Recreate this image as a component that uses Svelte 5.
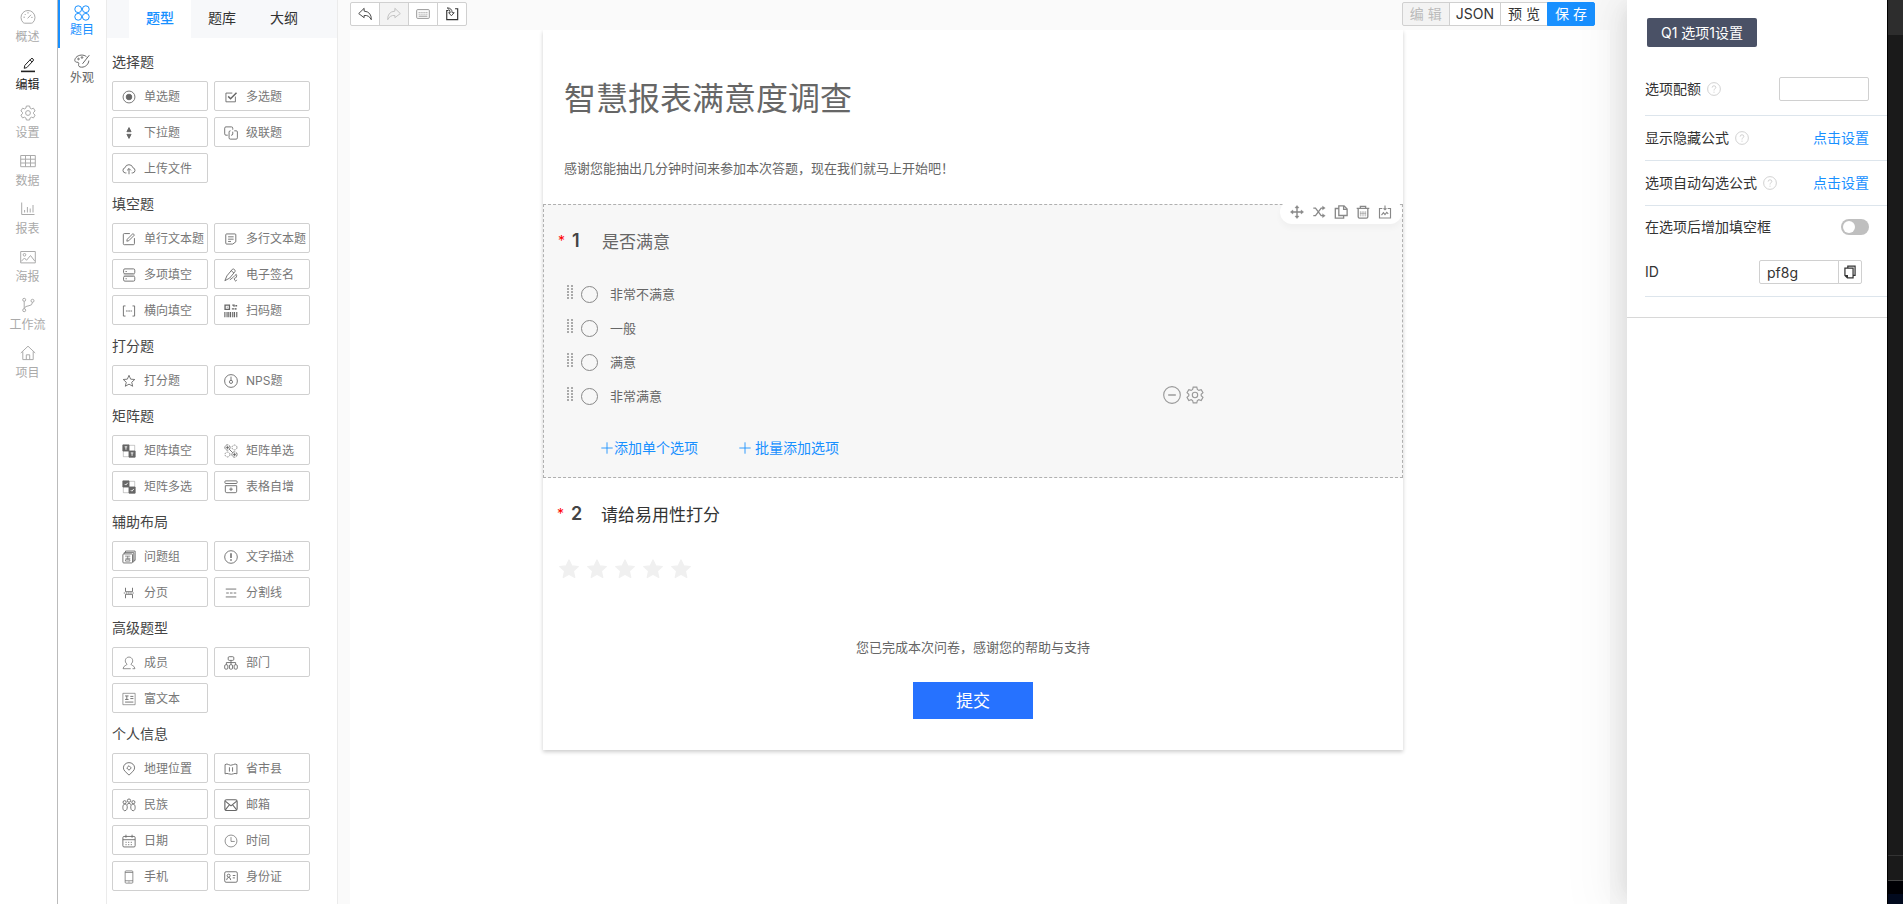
<script lang="ts">
  // Icon shapes, all drawn on a 16x16 grid
  const icons: Record<string, string> = {
    gauge: '<path d="M3.2 13.6A7 7 0 1 1 12.8 13.6Q12.2 14.2 11.4 14.2H4.6Q3.8 14.2 3.2 13.6Z"/><path d="M7.6 9.4 11 5.8M8 3v1.6M3.4 8.2H5M11.2 8.4h1.4M4.7 5l1 1"/>',
    pencil: '<path d="M4.2 11.3 4.8 8.4 11 1.8Q12 .9 13 1.9T13 4L6.8 10.6ZM10 2.9l2.1 2.1"/><path d="M1 14.4h14" stroke-width="1.6"/>',
    gear: '<path d="M6.4 1h3.2l.5 2.1 1.3.8 2.1-.7 1.6 2.8-1.6 1.4v1.3l1.6 1.4-1.6 2.8-2.1-.7-1.3.8-.5 2H6.4l-.5-2-1.3-.8-2.1.7L.9 10.1l1.6-1.4V7.4L.9 6l1.6-2.8 2.1.7 1.3-.8z"/><circle cx="8" cy="8" r="2.4"/>',
    table: '<path d="M.7 2.5h14.6v11.2H.7ZM.7 6.2h14.6M.7 10h14.6M5.5 2.5v11.2M10.5 2.5v11.2"/>',
    chart: '<path d="M1.7 1.5v12h12.8M4.6 11.5V9M7.4 11.5V6M10.2 11.5V7.5M13 11.5V4"/>',
    image: '<path d="M.7 2.5h14.6v11.4H.7Z"/><circle cx="4.5" cy="5.8" r="1.3"/><path d="M1.2 12.4 4.5 9l2 2.3 4-4.8 4.3 5.6"/>',
    branch: '<circle cx="4.2" cy="2.8" r="1.5"/><circle cx="12.5" cy="3.8" r="1.5"/><circle cx="4.2" cy="13.2" r="1.5"/><path d="M4.2 4.3v7.4M12.5 5.3Q12.3 8.5 9 8.7 4.6 9 4.2 11.7"/>',
    home: '<path d="M.8 8 8 1.2 15.2 8M2.8 6.4v8.2h10.4V6.4M6.3 14.6V9.8h3.4v4.8"/>',
    clover: '<circle cx="4.2" cy="4.2" r="3.4"/><circle cx="11.8" cy="4.2" r="3.4"/><circle cx="4.2" cy="11.8" r="3.4"/><circle cx="11.8" cy="11.8" r="3.4"/>',
    palette: '<path d="M12.5 3.8C10 1.3 4.5 1.5 2 4.5-.2 7.2 1 9.2 2.8 9.2c2 0 2.2.8 1.8 2.2-.4 1.6.6 2.8 3 2.8 4 0 7-3 7.200-6.600"/><circle cx="4.5" cy="6" r=".8"/><circle cx="8" cy="4.5" r=".8"/><path d="M15.3 2.2 8.5 10.8"/>',
    radio: '<circle cx="8" cy="8" r="6.8"/><circle cx="8" cy="8" r="3.2" fill="currentColor"/>',
    check: '<path d="M13 7.5v6H2.2V3.5H9.5"/><path d="M4.8 7.3 7.5 10 14.3 3.2" stroke-width="1.7"/>',
    updown: '<path d="M8 1.8 10.4 6.5H5.6ZM8 14.2 5.6 9.5h4.8Z" fill="currentColor"/>',
    cascade: '<path d="M4.3 10.5H2.2Q.8 10.5.8 9V2.5Q.8 1 2.2 1H8.5Q10 1 10 2.500v1.700M11.700 5.500H14q1.300 0 1.300 1.300v6.700q0 1.500-1.400 1.500H7.200q-1.400 0-1.400-1.500V7q0-1.500 1.400-1.500H7.500M10 6.500v2.600q0 1.400-1.400 1.400H8"/>',
    cloud: '<path d="M5 12.500H3.800A3 3 0 0 1 3.400 6.600 4.700 4.700 0 0 1 12.500 6.600 3 3 0 0 1 12.200 12.500H11M8 14V7.600M5.800 9.600 8 7.400l2.200 2.200"/>',
    edit: '<path d="M9 1.800H2.700Q1.500 1.800 1.500 3v10.300q0 1.200 1.200 1.200h10.300q1.200 0 1.200-1.200V7"/><path d="M5.500 10.500 6 8.300 12.500 1.800l1.700 1.700L7.700 10Z"/>',
    lines: '<path d="M10 13.800H3Q2 13.800 2 12.800V3.200Q2 2.200 3 2.200h9.500q1 0 1 1v8M4.700 5.500h6.300M4.700 8.200h6.300M4.700 10.800h3.300M13.500 11.200 10 13.800"/>',
    blanks: '<rect x="1.800" y="1" width="12.800" height="5.600" rx="1.500"/><rect x="1.800" y="9.400" width="12.800" height="5.600" rx="1.500"/><path d="M4 4h1.500M4 12.300h1.500"/><path d="M1.800 8h12.800" opacity=".5"/>',
    sign: '<path d="M1 14.500 3.300 9 9.500 1.500q1.500-.9 2.600.4t.4 2.300L6.500 11.500ZM8.200 3l3.200 2.800M6.700 13.500Q10.500 11 12.500 8.500t2 .2-1.800 2.700-.5 2.500 2.300-.4"/>',
    bracket: '<path d="M4 2.200H1.600v11.600H4M12 2.200h2.400v11.600H12"/><path d="M4.500 8h7" stroke-dasharray="2 .6"/>',
    qrcode: '<path d="M1.200 1.200h5v5h-5ZM9.500 1.200h2v2M13 2h2M9 5.500h3M13.500 4.500v2" stroke-width="1.500"/><path d="M3.200 3.700h1"/><path d="M1 9v6M3.500 9v6M5.500 9v6M7.500 9v6M10 9v6M12 9v6M14.600 9v6" stroke-width="1.300"/>',
    star: '<path d="M8 1.500 9.900 5.900l4.700.4-3.500 3.100 1.100 4.600L8 11.600 3.800 14l1.100-4.600L1.400 6.300l4.700-.4Z"/>',
    nps: '<circle cx="8" cy="8" r="7.300"/><circle cx="8" cy="9" r="1.800"/><path d="M8 3v4.200"/>',
    matrixFill: '<path d="M1 1h7v7H1ZM8 8h7v7H8Z" fill="currentColor"/><path d="M8 1.500h6.500V8M1.500 8v6.500H8" opacity=".4"/><path d="M3 3.200h3M4.500 3.200v3.300M10 10.200h3M11.500 10.200v3.300" stroke="#fff"/>',
    matrixRadio: '<circle cx="4" cy="4" r="3" stroke-dasharray="3 .8"/><circle cx="12" cy="12" r="3" stroke-dasharray="3 .8"/><circle cx="12" cy="4" r="2.800" stroke-dasharray="2 1" opacity=".8"/><circle cx="4" cy="12" r="2.800" stroke-dasharray="2 1" opacity=".8"/><path d="M6 6l4 4"/><circle cx="4" cy="4" r="1" fill="currentColor"/><circle cx="12" cy="12" r="1" fill="currentColor"/>',
    matrixCheck: '<path d="M1 1h7v7H1ZM8 8h7v7H8Z" fill="currentColor"/><path d="M8 1.500h6.500V8M1.500 8v6.500H8" opacity=".4"/><path d="M3 4.500 4.300 5.800 6.500 3.200M10 11.500l1.300 1.300 2.200-2.600" stroke="#fff"/>',
    addRow: '<rect x="1" y="1" width="14" height="3" rx="1"/><path d="M1.500 6.500h13v6.300q0 1.700-1.700 1.700H3.200q-1.700 0-1.700-1.700ZM8 8.500v4M6 10.500h4"/>',
    group: '<path d="M4 3V1.200h11v10.600h-1.500M2.500 4.500V3h11v10.500H12"/><rect x="1" y="4.500" width="11" height="10.300" rx="1"/><path d="M3.500 7h6M6.500 7v3M4 9.500h5.500M4 12.700V11h5v1.700Z" stroke-width=".8"/>',
    notice: '<circle cx="8" cy="8" r="7.200"/><path d="M8 3.800v5.400M8 10.600v1.600" stroke-width="1.700"/>',
    page: '<path d="M4 2v4.500h8V2M4 14V9.500h8V14"/><path d="M2 8h12" stroke-dasharray="1.500 1"/>',
    divider: '<path d="M2 3.500h12M2 12.500h12"/><path d="M2.500 8h11.500" stroke-dasharray="3 1.300"/>',
    member: '<path d="M5.800 9.300C2 6.500 4 1.200 8 1.200s6 5.300 2.200 8.100c-.2 1.500 4.300 1.300 4.600 5.200H12M5.800 9.300c.2 1.500-4.300 1.300-4.600 5.200H10" stroke-width=".8"/>',
    tree: '<rect x="4.800" y=".8" width="6.400" height="4.200" rx="1.200"/><path d="M8 5v5M2.700 10V7.500h10.600V10"/><rect x=".8" y="10" width="3.600" height="5" rx="1.200"/><rect x="6.200" y="10" width="3.600" height="5" rx="1.200"/><rect x="11.600" y="10" width="3.600" height="5" rx="1.200"/>',
    rich: '<path d="M1 1.500h14v13H1Z" opacity=".7"/><path d="M3.500 4.500h4M5.500 4.500v4M3.500 8.500h4M9.500 5h3.500M9.500 7.500h3.500M3.500 11.500h9.500"/>',
    pin: '<path d="M8 15C5 12 1.600 9.800 1.600 6.700A6.400 6 0 0 1 14.400 6.700C14.400 9.800 11 12 8 15Z"/><path d="M8 4.200 10.600 6.800 8 9.400 5.400 6.800Z"/>',
    map: '<path d="M1.200 3Q3.500 1.500 5.300 3T10.700 3Q12.500 1.500 14.800 3V13.500Q12.500 12.500 10.700 13.500T5.300 13.500Q3.500 12.500 1.200 13.500ZM6.200 6v5M9.800 6v5"/>',
    people: '<circle cx="8" cy="3" r="1.900"/><circle cx="3" cy="4.800" r="1.800"/><circle cx="13" cy="4.800" r="1.800"/><path d="M3 7C.3 7 .3 14.500 3 14.500S6 12 6 10 4.500 7 3 7ZM13 7c2.700 0 2.700 7.500 0 7.500S10 12 10 10s1.500-3 3-3ZM5.500 7.500Q8 4.500 10.500 7.500"/>',
    mail: '<g stroke-width="1.300"><rect x="1" y="2" width="14" height="12.300" rx="2"/><path d="M1.500 3.500 8 9l6.500-5.500M1.500 13.500 6 8M14.500 13.500 10 8"/></g>',
    calendar: '<rect x="1" y="2.800" width="14" height="12" rx="1.300"/><path d="M1 6.500h14M4.500 .8v3.500M11.500 .8v3.500"/><path d="M4 9.500h8.500M4 12.200h8.500" stroke-dasharray="1.300 1.700"/>',
    clock: '<g stroke-width=".8"><circle cx="8" cy="8" r="6.800"/><path d="M8 3.500V8.500h4.300"/></g>',
    phone: '<g stroke-width=".8"><rect x="3.600" y="1" width="8.800" height="14" rx="1"/><path d="M3.600 2.800h8.800M3.600 12.300h8.800M7.300 13.700h1.400"/></g>',
    card: '<rect x=".8" y="2" width="14.400" height="12" rx="1.600"/><path d="M3 11.500Q3.300 8.700 5.300 8.500T7.700 11.500M10 6.300h3M10 9h2.500"/><circle cx="5.300" cy="6.500" r="1.700"/>',
    undo: '<path d="M7 1.500.8 7.500 7 12.200V9.700Q12.500 9 15.200 14.500 15.500 5.500 7 4.700Z"/>',
    redo: '<path d="M9 1.500 15.200 7.500 9 12.200V9.700Q3.500 9 .8 14.500 .5 5.500 9 4.700Z"/>',
    keyboard: '<g stroke="#888"><rect x=".8" y="3" width="14.400" height="10" rx="1"/><path d="M3 6.200h10M3 8.200h10" stroke-dasharray="1.200 1"/><path d="M3 10.500h10"/></g>',
    importer: '<path d="M4 4H2v10.500h12.500V2H11.500" stroke-width="1.300"/><path d="M2.500 1Q8 1 8.200 6.500h2.300L7.300 10 4.200 6.500h1.800Q6 3 2.500 1Z"/>',
    move: '<path d="M8 2v12M2 8h12" stroke-width="1.600"/><path d="M8 .5 10.300 3.300H5.700ZM8 15.500 5.700 12.700h4.600ZM.5 8 3.300 5.700v4.600ZM15.500 8 12.700 10.300V5.700Z" fill="currentColor" stroke-width=".5"/>',
    shuffle: '<path d="M1.500 3.500H4L10.500 12.200H13M1.500 12.200H4L10.500 3.500H13" stroke-width="1.500"/><path d="M12 1.200 15.200 3.500 12 5.800ZM12 9.900l3.200 2.300L12 14.500Z" fill="currentColor" stroke-width=".3"/>',
    copy: '<g stroke-width="1.500"><path d="M5.500 1H11.500L15 4.500V12H5.500ZM11 1v4h4M5.500 4H1.500v11h9.500v-3"/></g>',
    trash: '<g stroke-width="1.500"><path d="M.8 3.800h14.400M5 3.800V1.500h6v2.300M2.500 4v9.500q0 1.500 1.500 1.500h8q1.500 0 1.500-1.500V4"/></g><path d="M4.500 9.500h7M5 7v6M7 7v6M9 7v6M11 7v6" opacity=".6"/>',
    save: '<path d="M5 4H1.700v10.800h12.600V4H11M8 .5v5M6.300 3.800 8 5.500l1.700-1.700M4 11.500l2.200-2.800L8 11l2-2.500 1.700 1.700" stroke-width="1.300"/>',
    minus: '<circle cx="8" cy="8" r="7.400"/><path d="M4.600 8h6.800" stroke-width="1.300"/>',
    duplicate: '<g stroke-width="1.400"><path d="M5.500 3.500V1.200h8.300v10.600h-2.300M2.200 3.500h9.300v11.300H5L2.200 12ZM2.200 12H5v2.800"/></g>',
    help: '<circle cx="8" cy="8" r="7.300"/><path d="M5.900 6.400Q6 4.300 8 4.300t2.100 1.900q0 1.100-1.200 1.700T8 9.700M8 11v1.300"/>',
    rate: '<path d="M8 .8 10.200 5.500l5.200.6-3.900 3.500 1.100 5.200L8 12.200 3.400 14.800l1.100-5.200L.6 6.100l5.200-.6Z" fill="currentColor" stroke-linejoin="round"/>',
    plus: '<path d="M8 1.500v13M1.500 8h13"/>'
  };

  const mainNav = [
    { label: '概述', icon: 'gauge' },
    { label: '编辑', icon: 'pencil' },
    { label: '设置', icon: 'gear' },
    { label: '数据', icon: 'table' },
    { label: '报表', icon: 'chart' },
    { label: '海报', icon: 'image' },
    { label: '工作流', icon: 'branch' },
    { label: '项目', icon: 'home' }
  ];

  const subNav = [
    { label: '题目', icon: 'clover' },
    { label: '外观', icon: 'palette' }
  ];

  const tabs = ['题型', '题库', '大纲'];

  const groups = [
    { title: '选择题', items: [['单选题', 'radio'], ['多选题', 'check'], ['下拉题', 'updown'], ['级联题', 'cascade'], ['上传文件', 'cloud']] },
    { title: '填空题', items: [['单行文本题', 'edit'], ['多行文本题', 'lines'], ['多项填空', 'blanks'], ['电子签名', 'sign'], ['横向填空', 'bracket'], ['扫码题', 'qrcode']] },
    { title: '打分题', items: [['打分题', 'star'], ['NPS题', 'nps']] },
    { title: '矩阵题', items: [['矩阵填空', 'matrixFill'], ['矩阵单选', 'matrixRadio'], ['矩阵多选', 'matrixCheck'], ['表格自增', 'addRow']] },
    { title: '辅助布局', items: [['问题组', 'group'], ['文字描述', 'notice'], ['分页', 'page'], ['分割线', 'divider']] },
    { title: '高级题型', items: [['成员', 'member'], ['部门', 'tree'], ['富文本', 'rich']] },
    { title: '个人信息', items: [['地理位置', 'pin'], ['省市县', 'map'], ['民族', 'people'], ['邮箱', 'mail'], ['日期', 'calendar'], ['时间', 'clock'], ['手机', 'phone'], ['身份证', 'card']] }
  ];

  const historyTools = [
    { label: '撤销', icon: 'undo', disabled: false },
    { label: '重做', icon: 'redo', disabled: true },
    { label: '快捷键', icon: 'keyboard', disabled: false },
    { label: '导入', icon: 'importer', disabled: false }
  ];

  const questionTools = [
    { label: '移动', icon: 'move' },
    { label: '逻辑', icon: 'shuffle' },
    { label: '复制', icon: 'copy' },
    { label: '删除', icon: 'trash' },
    { label: '收藏', icon: 'save' }
  ];

  let activeMain = $state('编辑');
  let activeSub = $state('题目');
  let activeTab = $state('题型');
  let options = $state(['非常不满意', '一般', '满意', '非常满意']);
  let activeOption = $state(3);
  let answer = $state('');
  let score = $state(0);
  let quota = $state('');
  let withBlank = $state(false);
  let optionId = $state('pf8g');

  function addOption() {
    options.push('选项');
  }

  function removeOption(index: number) {
    options.splice(index, 1);
  }
</script>

{#snippet icon(name: string)}
  <svg class="icon" viewBox="0 0 16 16" aria-hidden="true">{@html icons[name]}</svg>
{/snippet}

<div class="app">
  <nav class="main-nav">
    {#each mainNav as item}
      <button type="button" class:active={activeMain === item.label} onclick={() => (activeMain = item.label)}>
        {@render icon(item.icon)}
        <span>{item.label}</span>
      </button>
    {/each}
  </nav>

  <nav class="sub-nav">
    {#each subNav as item}
      <button type="button" class:active={activeSub === item.label} onclick={() => (activeSub = item.label)}>
        {@render icon(item.icon)}
        <span>{item.label}</span>
      </button>
    {/each}
  </nav>

  <aside class="types">
    <div class="tabs">
      {#each tabs as tab}
        <button type="button" class:active={activeTab === tab} onclick={() => (activeTab = tab)}>{tab}</button>
      {/each}
    </div>
    <div class="groups">
      {#each groups as group}
        <h3>{group.title}</h3>
        <div class="type-grid">
          {#each group.items as [label, name]}
            <button type="button">{@render icon(name)}<span>{label}</span></button>
          {/each}
        </div>
      {/each}
    </div>
  </aside>

  <main class="editor">
    <header class="toolbar">
      <div class="tool-group history">
        {#each historyTools as tool}
          <button type="button" aria-label={tool.label} disabled={tool.disabled}>{@render icon(tool.icon)}</button>
        {/each}
      </div>
      <div class="tool-group modes">
        <button type="button" disabled>编 辑</button>
        <button type="button">JSON</button>
        <button type="button">预 览</button>
        <button type="button" class="primary">保 存</button>
      </div>
    </header>

    <div class="canvas">
      <article class="paper">
        <h1>智慧报表满意度调查</h1>
        <p class="intro">感谢您能抽出几分钟时间来参加本次答题，现在我们就马上开始吧！</p>

        <section class="question selected">
          <div class="question-tools">
            {#each questionTools as tool}
              <button type="button" aria-label={tool.label}>{@render icon(tool.icon)}</button>
            {/each}
          </div>
          <div class="question-title">
            <span class="required">*</span>
            <span class="number">1</span>
            <h2>是否满意</h2>
          </div>
          <ul class="options">
            {#each options as option, i}
              <li>
                <span class="handle"></span>
                <label>
                  <input type="radio" name="q1" value={option} bind:group={answer} />
                  <span>{option}</span>
                </label>
                {#if i === activeOption}
                  <div class="option-tools">
                    <button type="button" aria-label="删除选项" onclick={() => removeOption(i)}>{@render icon('minus')}</button>
                    <button type="button" aria-label="选项设置">{@render icon('gear')}</button>
                  </div>
                {/if}
              </li>
            {/each}
          </ul>
          <div class="add-links">
            <button type="button" onclick={addOption}>{@render icon('plus')}添加单个选项</button>
            <button type="button" class="batch">{@render icon('plus')}批量添加选项</button>
          </div>
        </section>

        <section class="question">
          <div class="question-title">
            <span class="required">*</span>
            <span class="number">2</span>
            <h2>请给易用性打分</h2>
          </div>
          <div class="rating">
            {#each [1, 2, 3, 4, 5] as n}
              <button type="button" aria-label="{n} 分" class:on={n <= score} onclick={() => (score = n)}>
                {@render icon('rate')}
              </button>
            {/each}
          </div>
        </section>

        <footer>
          <p>您已完成本次问卷，感谢您的帮助与支持</p>
          <button type="button" class="submit">提交</button>
        </footer>
      </article>
    </div>
  </main>

  <aside class="drawer">
    <div class="drawer-tag">Q1 选项1设置</div>
    <div class="settings">
      <div class="row tall">
        <label for="quota">选项配额</label>
        <span class="help">{@render icon('help')}</span>
        <input id="quota" class="quota" type="text" bind:value={quota} />
      </div>
      <div class="row">
        <span>显示隐藏公式</span>
        <span class="help">{@render icon('help')}</span>
        <a href="#visible">点击设置</a>
      </div>
      <div class="row">
        <span>选项自动勾选公式</span>
        <span class="help">{@render icon('help')}</span>
        <a href="#auto">点击设置</a>
      </div>
      <div class="row plain">
        <label for="with-blank">在选项后增加填空框</label>
        <input id="with-blank" class="switch" type="checkbox" bind:checked={withBlank} />
      </div>
      <div class="row id-row">
        <label for="option-id">ID</label>
        <div class="id-field">
          <input id="option-id" type="text" bind:value={optionId} />
          <button type="button" aria-label="复制 ID">{@render icon('duplicate')}</button>
        </div>
      </div>
    </div>
  </aside>

  <div class="desktop-edge">
    <div class="edge-top"></div>
    <div class="edge-body"></div>
    <div class="edge-status"></div>
    <div class="edge-bottom"></div>
    <div class="edge-dock"></div>
  </div>
</div>

<style>
  :global(body) {
    background: #fafafa;
  }

  .app {
    display: flex;
    min-height: 100vh;
    overflow: hidden;
    background: #fafafa;
    color: #333;
    font-family: Inter, 'Noto Sans CJK SC', sans-serif;
    font-size: 14px;
    line-height: 20px;
  }

  .app * {
    box-sizing: border-box;
  }

  button {
    padding: 0;
    border: 0;
    background: none;
    color: inherit;
    font: inherit;
    cursor: pointer;
  }

  input {
    margin: 0;
    font: inherit;
    color: inherit;
  }

  h1, h2, h3, p, ul {
    margin: 0;
    padding: 0;
    font-weight: 400;
  }

  .icon {
    display: block;
    flex: none;
    width: 14px;
    height: 14px;
    fill: none;
    stroke: currentColor;
    stroke-width: 1;
  }

  /* Navigation rails */
  .main-nav, .sub-nav {
    display: flex;
    flex: none;
    flex-direction: column;
    background: #fff;
    font-size: 12px;
    line-height: 18px;
  }

  .main-nav {
    width: 58px;
    border-right: 1px solid #bbb;
    color: #aaa;
  }

  .sub-nav {
    width: 49px;
    border-right: 1px solid #ebebeb;
    color: #666;
  }

  .main-nav button, .sub-nav button {
    display: flex;
    flex-direction: column;
    align-items: center;
    gap: 3px;
    height: 48px;
    padding: 9px 2px 0 0;
  }

  .main-nav .active {
    color: #222;
  }

  .sub-nav button {
    gap: 0;
    padding: 5px 2px 0 0;
    border-left: 2px solid transparent;
  }

  .sub-nav .active {
    border-color: #1890ff;
    color: #1890ff;
  }

  .main-nav .icon, .sub-nav .icon {
    width: 16px;
    height: 16px;
  }

  /* Question types */
  .types {
    flex: none;
    width: 231px;
    border-right: 1px solid #ebebeb;
    background: #fff;
  }

  .tabs {
    display: flex;
    height: 38px;
    padding-left: 22px;
    background: #f7f8fa;
  }

  .tabs button {
    width: 62px;
    padding-bottom: 2px;
  }

  .tabs .active {
    background: #fff;
    color: #1890ff;
    font-weight: 500;
  }

  .groups {
    padding: 3px 5px;
  }

  h3 {
    padding: 11px 0 9px;
    color: #444;
    font-size: 14px;
    line-height: 20px;
  }

  .type-grid {
    display: grid;
    grid-template-columns: 96px 96px;
    gap: 6px;
  }

  .type-grid button {
    display: flex;
    align-items: center;
    gap: 8px;
    height: 30px;
    padding: 2px 0 0 9px;
    border: 1px solid #d0d0d0;
    border-radius: 2px;
    color: #777;
    font-size: 12px;
    white-space: nowrap;
  }

  .type-grid .icon {
    color: #666;
  }

  /* Editor */
  .editor {
    display: flex;
    flex: 1;
    flex-direction: column;
    min-width: 0;
    padding: 0 17px 0 12px;
  }

  .toolbar {
    display: flex;
    justify-content: space-between;
    height: 30px;
    padding: 2px 15px 0 0;
  }

  .tool-group {
    display: flex;
  }

  .tool-group button {
    height: 24px;
    padding: 0 7px;
    border: 1px solid #d0d0d0;
    background: #fff;
    line-height: 20px;
  }

  .modes button {
    min-width: 48px;
    padding: 0 6px;
  }

  .tool-group button + button {
    margin-left: -1px;
  }

  .tool-group button:first-child {
    border-radius: 2px 0 0 2px;
  }

  .tool-group button:last-child {
    border-radius: 0 2px 2px 0;
  }

  .tool-group button:disabled {
    background: #f3f3f3;
    color: #bbb;
    cursor: not-allowed;
  }

  .tool-group .primary {
    border-color: #1890ff;
    background: #1890ff;
    color: #fff;
  }

  .canvas {
    flex: 1;
    padding-right: 14px;
    background: #fff;
  }

  .paper {
    max-width: 860px;
    margin: 0 auto;
    background: #fff;
    box-shadow: 0 2px 4px rgba(0, 0, 0, 0.2);
    clip-path: inset(0 -8px -8px -8px);
  }

  h1 {
    padding: 45px 21px 0;
    color: #666;
    font-size: 32px;
    line-height: 48px;
  }

  .intro {
    padding: 35px 21px 26px;
    color: #666;
    font-size: 13px;
    line-height: 20px;
  }

  .question {
    position: relative;
    padding: 24px 14px 25px;
  }

  .selected {
    padding-bottom: 19px;
    border: 1px dashed #b0b0b0;
    background: #f7f7f7;
    color: #666;
  }

  .question-tools {
    position: absolute;
    top: -5px;
    right: 0;
    display: flex;
    gap: 8px;
    padding: 5px 10px;
    border-radius: 12px;
    background: #fff;
    box-shadow: 0 4px 6px rgba(0, 0, 0, 0.03);
    color: #888;
  }

  .question-title {
    display: flex;
    line-height: 24px;
  }

  .required {
    width: 14px;
    color: #f00;
  }

  .number {
    width: 30px;
    color: #444;
    font-size: 18px;
    font-weight: 600;
    line-height: 24px;
  }

  h2 {
    font-size: 17px;
    line-height: 26px;
  }

  .options {
    padding: 22px 0 0 9px;
    list-style: none;
    font-size: 13px;
  }

  .options li {
    display: flex;
    align-items: center;
    height: 34px;
  }

  .handle {
    width: 6px;
    height: 14px;
    margin-bottom: 4px;
    background: repeating-linear-gradient(transparent 0 2px, #f7f7f7 2px 3px), linear-gradient(90deg, #aaa 2px, transparent 2px 4px, #aaa 4px);
  }

  .options label {
    display: flex;
    align-items: center;
    gap: 12px;
    width: 585px;
    padding-left: 8px;
  }

  .options input {
    width: 17px;
    height: 17px;
    border: 1px solid #888;
    border-radius: 50%;
    appearance: none;
  }

  .options input:checked {
    border: 5px solid #1890ff;
  }

  .option-tools {
    display: flex;
    gap: 5px;
    padding: 0 0 2px 5px;
    color: #999;
  }

  .option-tools .icon {
    width: 18px;
    height: 18px;
  }

  .add-links {
    display: flex;
    gap: 40px;
    padding: 25px 0 0 42px;
    color: #1890ff;
  }

  .add-links button {
    display: flex;
    align-items: center;
  }

  .add-links .batch .icon {
    margin-right: 3px;
  }

  .rating {
    display: flex;
    gap: 8px;
    padding: 31px 0 0 2px;
    color: #f0f0f0;
  }

  .rating .on {
    color: #fadb14;
  }

  .rating .icon {
    width: 20px;
    height: 20px;
  }

  .selected + .question .question-title {
    color: #333;
  }

  footer {
    display: flex;
    flex-direction: column;
    align-items: center;
    gap: 25px;
    padding: 33px 20px 31px;
    color: #666;
    font-size: 13px;
  }

  .submit {
    width: 120px;
    height: 37px;
    background: #2672ff;
    color: #fff;
    font-size: 17px;
  }

  /* Option settings */
  .drawer {
    position: relative;
    flex: none;
    width: 260px;
    padding-top: 18px;
    background: #fff;
    box-shadow: -6px 0 16px -8px rgba(0, 0, 0, 0.08), -9px 0 28px rgba(0, 0, 0, 0.05), -12px 0 48px 16px rgba(0, 0, 0, 0.03);
  }

  .drawer-tag {
    width: max-content;
    margin: 0 20px 16px;
    padding: 5px 14px 4px;
    border-radius: 2px;
    background: #4a5166;
    color: #fff;
  }

  .settings {
    padding: 0 0 20px 18px;
    border-bottom: 1px solid #d8d8d8;
  }

  .row {
    display: flex;
    align-items: center;
    height: 45px;
    padding-right: 18px;
    border-bottom: 1px solid #dde5ec;
  }

  .tall {
    height: 53px;
  }

  .plain {
    height: 42px;
    border-bottom: 0;
  }

  .id-row {
    height: 49px;
  }

  .help {
    margin-left: 6px;
    color: #ccc;
  }

  .row a {
    margin-left: auto;
    color: #1890ff;
    text-decoration: none;
  }

  .quota, .id-field input {
    width: 90px;
    height: 24px;
    padding: 0 7px;
    border: 1px solid #d0d0d0;
    border-radius: 2px;
    background: #fff;
  }

  .quota {
    margin-left: auto;
  }

  .switch {
    display: flex;
    align-items: center;
    width: 28px;
    height: 16px;
    margin-left: auto;
    padding: 2px;
    border-radius: 8px;
    background: #bfbfbf;
    appearance: none;
    cursor: pointer;
  }

  .switch::before {
    width: 12px;
    height: 12px;
    border-radius: 50%;
    background: #fff;
    content: '';
  }

  .switch:checked {
    justify-content: flex-end;
    background: #1890ff;
  }

  .id-field {
    display: flex;
    margin: 0 7px 0 auto;
  }

  .id-field input {
    width: 80px;
    border-radius: 2px 0 0 2px;
  }

  .id-field button {
    display: grid;
    place-items: center;
    width: 24px;
    height: 24px;
    margin-left: -1px;
    border: 1px solid #d0d0d0;
    border-radius: 0 2px 2px 0;
  }

  /* Strip of the window behind */
  .desktop-edge {
    position: relative;
    display: flex;
    flex: none;
    flex-direction: column;
    width: 16px;
    border-left: 1px solid #000;
    background: #1a1a1a;
  }

  .edge-top {
    height: 35px;
    background: #2d2d2d;
  }

  .edge-body {
    flex: 1;
  }

  .edge-status {
    height: 26px;
    border-top: 1px solid #333;
    border-bottom: 1px solid #444;
  }

  .edge-bottom {
    height: 13px;
    background: #000004;
  }

  .edge-dock {
    height: 10px;
    background: #020a1e;
  }
</style>
